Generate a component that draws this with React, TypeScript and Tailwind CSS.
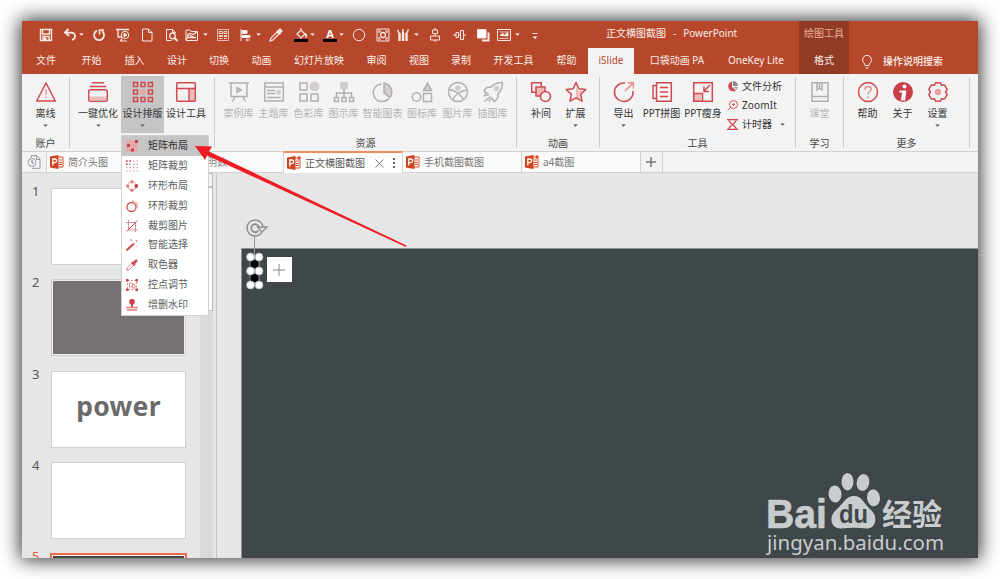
import React from 'react';

type IconName =
  | 'save' | 'undo' | 'redo' | 'present' | 'page' | 'preview' | 'folder' | 'grid' | 'align' | 'dropper'
  | 'fill' | 'fontColor' | 'circle' | 'frame' | 'pens' | 'center' | 'distribute' | 'layers' | 'picture' | 'more';

interface RibbonItem {
  label: string;
  icon: React.ReactNode;
  width: string;
  caret?: boolean;
  active?: boolean;
  disabled?: boolean;
}

// --- QUICK ACCESS ICONS (14x14 box) ---

const quickIcons: Record<IconName, React.ReactNode> = {
  save: <><path d="M1.5 1.5h11v11h-11z M3.5 1.5v4.5h7v-4.5" strokeWidth="1.4" /><path d="M4 12.5v-4h6v4" strokeWidth="1.4" /><path d="M5 10h2v2.5h-2z" fill="#fff" /></>,
  undo: <><path d="M5.5 1L2 4.500l4 3.500M2.300 4.600h5.700c5 0 5.500 5.700 1 7.400" strokeWidth="1.8" /></>,
  redo: <><path d="M5 2.600a5 5 0 1 0 5 .5" strokeWidth="1.8" /><path d="M7.500 6.500V2h4.500" strokeWidth="1.6" /></>,
  present: <><path d="M0 1.500h13M2 2v7h4M4 13l2-2" strokeWidth="1.300" /><circle cx="9" cy="7" r="3.700" /><path d="M8 5.200v3.600l3-1.800z" fill="#fff" /><path d="M5 13h6" /></>,
  page: <path d="M2.500 1h6l3.500 3.500v8.500h-9.500z M8.500 1v3.500h3.500" />,
  preview: <><path d="M10.500 4.500L7.500 1.500h-6v11h5" /><path d="M7.500 1.500v3h3" /><circle cx="7.500" cy="8" r="2.800" strokeWidth="1.300" /><path d="M9.500 10l3 3" strokeWidth="1.800" /></>,
  folder: <><path d="M1 12V2h4l1 1.500h6.500v9H1z" /><path d="M2 7l3-1.500 3 1L12 4M3 9.500h8M5 7.500l6 2.500M1 12l2.500-5" strokeWidth="1.300" /></>,
  grid: <><path d="M1.500 1.500h11v11h-11z" opacity=".7" /><path d="M3 3.500h3.500v2H3zM8 3.500h3v2H8zM3 7.500h3.500v1H3zM8 7.500h3v1H8zM3 10.500h3.500M8 10.500h3" opacity=".85" /></>,
  align: <><path d="M2 1v12" /><path d="M3 2.500h5v3h-5z" fill="#fff" /><path d="M3 7.500h8v2h-8z" fill="#fff" /><path d="M7 12h4M7 12l1.500-1.200M7 12l1.500 1.200" /></>,
  dropper: <><path d="M1 13l1-3 6-6 2 2-6 6z" strokeWidth="1.200" /><path d="M8 2.500l3.500 3.500M9 4l2-2.500 1.500 1.500-2 2z" strokeWidth="2" /></>,
  fill: <><path d="M3 6l4-4 4 4-4 4z M7 2V0" strokeWidth="1.200" /><path d="M11.500 5.500c1.500 1.500 1.500 3 .5 4z" fill="#fff" /><path d="M0 12.500h14" stroke="#000" strokeWidth="3" /></>,
  fontColor: <><text x="7" y="9.500" textAnchor="middle" fontSize="11" fontWeight="700" fill="#fff" stroke="none">A</text><path d="M0 12.500h14" stroke="#000" strokeWidth="3" /></>,
  circle: <circle cx="7" cy="7" r="5.700" />,
  frame: <><path d="M1 1h12v12h-12z" /><circle cx="7" cy="7" r="2.500" strokeWidth="1.300" /><path d="M3 5v-2h2M9 3h2v2M11 9v2h-2M5 11h-2v-2" strokeWidth="1.200" /></>,
  pens: <><path d="M3.500 5v8M7 4v9M10.500 5v8" strokeWidth="2.400" /><path d="M1.500 2l2 4M7 1v3M12.500 1.500l-2 4" strokeWidth="1.500" /></>,
  center: <path d="M4.500 2h5v3.500h-5z M2.500 8h9v4h-9z M7 0v2M7 5.500v2.500M7 12v2" />,
  distribute: <path d="M4 4.500h2.500v5h-2.500z M8.500 2.500h3v9h-3z M1 7h3M6.500 7h2M11.500 7h2.500" />,
  layers: <><path d="M6 12.500h6.500v-8" strokeWidth="2" /><path d="M1.500 1.500h8.500v8.500h-8.500z" fill="#fff" /></>,
  picture: <><path d="M.5 1.500h13v11H.5z" /><path d="M3 7.500l2.500-2 2 1.500 3.500-2.500v3.500z" fill="#fff" /><path d="M2.500 4h9M2.500 10.500h9" opacity=".8" /></>,
  more: <><path d="M4.500 5.500h5" /><path d="M4.700 8.500h4.600l-2.300 2.500z" fill="#fff" stroke="none" /></>,
};

const QuickIcon: React.FC<{ name: IconName; gap: string }> = ({ name, gap }) => (
  <svg viewBox="0 0 14 14" className={`h-[14px] w-[14px] shrink-0 overflow-visible ${gap}`} fill="none" stroke="#f8e9e4" strokeWidth="1">
    {quickIcons[name]}
  </svg>
);

const Caret: React.FC<{ className?: string; fill?: string }> = ({ className = '', fill = '#555' }) => (
  <svg viewBox="0 0 6 4" className={`h-[3px] w-[5px] shrink-0 ${className}`} fill={fill}>
    <path d="M0 .5h6l-3 3z" />
  </svg>
);

// --- RIBBON ICONS (22x22 box) ---

const Big: React.FC<{ children: React.ReactNode; gray?: boolean }> = ({ children, gray }) => (
  <svg viewBox="0 0 22 22" className="h-[22px] w-[22px] shrink-0" fill="none" stroke={gray ? '#b1afb0' : '#cf4a50'} strokeWidth="1.500">
    {children}
  </svg>
);

const P = '#f0b9ba';
const G = '#d3cdd0';

const offlineIcon = <Big><path d="M11 2L20.300 20H1.700z" strokeLinejoin="round" /><path d="M11 8v6M11 15.500v1.500" stroke="#e59a9c" /></Big>;
const optimizeIcon = <Big><path d="M5 1.800h12M2.800 5.500h16.400" /><rect x="1.700" y="8.800" width="18.600" height="11.500" rx="2" /><path d="M3 15.500h16v4h-16z" fill={P} stroke="none" /></Big>;
const layoutIcon = (
  <Big>
    {[1.5, 9, 16.5].map(x => [1.5, 9, 16.5].map(y => (
      x === 9 && y === 9
        ? <rect key={`${x}-${y}`} x="8.500" y="8.500" width="5" height="5" fill="#eba0a1" stroke="none" />
        : <rect key={`${x}-${y}`} x={x} y={y} width="4" height="4" />
    )))}
  </Big>
);
const toolsIcon = <Big><path d="M14.500 8h5v12h-5z" fill={P} stroke="none" /><rect x="1.700" y="1.700" width="18.600" height="18.600" rx="1" /><path d="M2 7.500h18M14 7.500V20" /></Big>;
const caseIcon = <Big gray><path d="M1 2h20M3 2v13.500h16V2M7 16l-2.500 4.500M15 16l2.500 4.500" /><path d="M9 6.500l4 2.500-4 2.500z" fill={G} /></Big>;
const themeIcon = <Big gray><path d="M1.700 2h18.600v18H1.700z M2 6h18M4 9.500h8M4 12.500h8M4 16.500h14" /><circle cx="15.500" cy="11.500" r="2.500" fill={G} stroke="none" /></Big>;
const colorIcon = <Big gray><path d="M2 2h7v7H2zM2 13h7v7H2zM13 13h7v7h-7z" /><circle cx="16.500" cy="5.500" r="4.300" fill={G} stroke={G} /></Big>;
const diagramIcon = <Big gray><path d="M8 1.500h6v6H8z" fill={G} stroke={G} /><path d="M11 8v8M3.500 16v-4h15v4M1.500 16.500h4v4h-4zM9 16.500h4v4H9zM16.500 16.500h4v4h-4z" /></Big>;
const chartIcon = <Big gray><path d="M12 2v10l6 4.500A9.200 9.200 0 0 0 12 2z" fill={G} /><path d="M9.500 3a8.800 8.800 0 1 0 7.500 14.300" /></Big>;
const symbolIcon = <Big gray><path d="M12.500 9.500L16.500 2l4 7.500z" fill={G} /><circle cx="5.500" cy="16" r="4.300" /><path d="M12.500 12.500h8v8h-8z" /></Big>;
const photoIcon = <Big gray><circle cx="11" cy="11" r="9.500" /><circle cx="11" cy="7" r="2" fill={G} stroke={G} /><path d="M2 8.500c5 0 11 4 14.500 10M6 19c1.500-5 7-9 14-10" /></Big>;
const rocketIcon = <Big gray><path d="M5.500 12.500L2 10c2-4 4-4.500 7-3.700C12 2.500 15.500 1.500 20.500 1.500c0 5-1 8.500-4.700 11.500.8 3-.3 5.500-3.800 7.500l-2.500-4" strokeLinejoin="round" /><path d="M7 13.500l-5.500 1.500M8.500 15.500l-6 5M5 12l-3 .5M10 17l-3.500 3.500" /><circle cx="14.500" cy="7.500" r="2" fill={G} stroke={G} /></Big>;
const tweenIcon = <Big><path d="M1.700 1.700h9.600v9.600H1.700z" /><path d="M6 6h9v9H6z" fill={P} /><circle cx="15.500" cy="15.500" r="5" fill="#f3f3f3" /></Big>;
const starIcon = <Big><path d="M11 5l2 4.500 5 .5-3.700 3.300L15 18l-4-2z" fill={P} stroke="none" /><path d="M11 1.500l2.900 6.300 6.800.8-5 4.700 1.300 6.900-6-3.400-6 3.400 1.300-6.900-5-4.700 6.800-.8z" strokeLinejoin="round" /></Big>;
const exportIcon = <Big><path d="M12 2A9.300 9.300 0 1 0 20 10" /><path d="M12 10l8-8M14.500 1.700h5.800v5.800" stroke="#e58f91" /></Big>;
const puzzleIcon = <Big><path d="M5.500 1.700h14.800v18.600H5.500zM5.500 4.500H2v13h3.500" /><path d="M9 6.500h8M9 11h8M9 15.500h8" /></Big>;
const slimIcon = <Big><path d="M2 13h7v7H2z" fill={P} stroke="none" /><path d="M1.700 1.700h18.600v18.600H1.700zM10.500 20v-8M1.700 12.500h9M18 4l-6 6M12 5.500v5h5" /></Big>;
const courseIcon = <Big gray><path d="M3 1.700h16v18.600H3zM3 15.500h16" /><path d="M8 2v7l2.500-2 2.500 2V2M10.500 3v4" /></Big>;
const helpIcon = <Big><circle cx="11" cy="11" r="9.500" /><path d="M8 8.500c0-4 6.500-4 6.200-.2-.2 2.200-3.200 2.400-3.200 5.200M11 15.500v1.700" stroke="#e58f91" /></Big>;
const aboutIcon = <Big><circle cx="11" cy="11" r="10" fill="#c9404a" stroke="none" /><circle cx="12.500" cy="5.500" r="2" fill="#fff" stroke="none" /><path d="M7.500 10.500h4c-.5 3-1.500 6-1.500 9M13.200 9.500c0 3.500-1 7-1 10" stroke="#fff" strokeWidth="2" /></Big>;
const settingsIcon = <Big><path d="M8.500 1.700h5l1 2.600 3-.4 2.700 4.400-1.700 2.700 1.700 2.700-2.700 4.400-3-.4-1 2.600h-5l-1-2.600-3 .4-2.700-4.400L3.500 11 1.800 8.300l2.700-4.400 3 .4z" strokeLinejoin="round" /><circle cx="11" cy="11" r="3.200" fill="#e8a0a2" stroke="none" /></Big>;

const layoutItems: RibbonItem[] = [
  { label: '一键优化', icon: optimizeIcon, width: 'w-[46px]', caret: true },
  { label: '设计排版', icon: layoutIcon, width: 'w-[43px]', caret: true, active: true },
  { label: '设计工具', icon: toolsIcon, width: 'w-[44px]' },
];

const resourceItems: RibbonItem[] = [
  { label: '案例库', icon: caseIcon, width: 'w-[35px]', disabled: true },
  { label: '主题库', icon: themeIcon, width: 'w-[35px]', disabled: true },
  { label: '色彩库', icon: colorIcon, width: 'w-[35px]', disabled: true },
  { label: '图示库', icon: diagramIcon, width: 'w-[35px]', disabled: true },
  { label: '智能图表', icon: chartIcon, width: 'w-[43px]', disabled: true },
  { label: '图标库', icon: symbolIcon, width: 'w-[36px]', disabled: true },
  { label: '图片库', icon: photoIcon, width: 'w-[35px]', disabled: true },
  { label: '插图库', icon: rocketIcon, width: 'w-[35px]', disabled: true },
];

const RibbonButton: React.FC<{ item: RibbonItem }> = ({ item }) => (
  <div className={`flex h-[57px] shrink-0 flex-col items-center pt-[5px] ${item.width} ${item.active ? 'bg-[#c5c5c5]' : ''}`}>
    {item.icon}
    <span className={`mt-[3px] text-[10px] leading-[15px] whitespace-nowrap ${item.disabled ? 'text-[#b4b4b4]' : 'text-[#333]'}`}>{item.label}</span>
    {item.caret && <Caret className="mt-[3px]" />}
  </div>
);

const RibbonGroup: React.FC<{ width: string; label?: string; pad?: string; children: React.ReactNode }> = ({ width, label, pad = '', children }) => (
  <div className={`mt-[3px] flex h-[71px] shrink-0 flex-col border-r border-[#cbcbcb] ${width}`}>
    <div className={`-mt-px flex h-[59px] shrink-0 ${pad}`}>{children}</div>
    <div className="text-center text-[10px] leading-[17px] text-[#444]">{label}</div>
  </div>
);

// --- DROPDOWN ---

const menuItems: { label: string; icon: React.ReactNode }[] = [
  { label: '矩阵布局', icon: <><path d="M0 0h12v12H0z" fill="#e3a9ab" stroke="none" /><path d="M9 0h3v3H9zM1 4h3v3H1zM5 8.500h3v3H5z" fill="#c9404a" stroke="none" /></> },
  { label: '矩阵裁剪', icon: <><path d="M0 1h12M0 4.300h12M0 7.700h12M0 11h12" strokeDasharray="1.500 2" stroke="#dc9092" /><path d="M0 1h6M0 4.300h4" strokeDasharray="1.500 2" stroke="#c9404a" strokeWidth="1.500" /></> },
  { label: '环形布局', icon: <><circle cx="6" cy="6" r="4.200" strokeDasharray="3.600 3" strokeDashoffset="-1.500" stroke="#dc9092" /><circle cx="6" cy="1.700" r="1.700" fill="#dc8082" stroke="none" /><circle cx="6" cy="10.300" r="1.700" fill="#dc8082" stroke="none" /><circle cx="1.700" cy="6" r="1.700" fill="#dc8082" stroke="none" /><circle cx="10.300" cy="6" r="1.900" fill="#c9404a" stroke="none" /></> },
  { label: '环形裁剪', icon: <><circle cx="5.500" cy="7" r="4.500" strokeWidth="1.300" /><path d="M6 1c4 0 6 3 5 7" stroke="#dc9092" /></> },
  { label: '裁剪图片', icon: <><path d="M2.500 0v10H12M0 2.500h9.500V12" stroke="#dc9092" /><path d="M.5 11.500l11-11" /></> },
  { label: '智能选择', icon: <><path d="M.5 11.500L8 4.500" strokeWidth="2" /><path d="M5 0v2M4 1h2M10.500 1v2M9.500 2h2M11 7v1" stroke="#dc9092" /></> },
  { label: '取色器', icon: <><path d="M.7 11.300l.8-2.500 5-5 1.800 1.800-5 5z" stroke="#d77" /><path d="M6 3l3 3M7.500 4.500L11 1" strokeWidth="2.500" /></> },
  { label: '控点调节', icon: <><path d="M1.500 1.500h9v9h-9z" strokeDasharray="2 1.500" stroke="#dc9092" /><path d="M3.500 4h3v4h-3zM6 5.500h3V9H6" stroke="#dc9092" /><path d="M0 0h2.500v2.500H0zM9.500 0H12v2.500H9.500zM0 9.500h2.500V12H0zM9.500 9.500H12V12H9.500z" fill="#c9404a" stroke="none" /></> },
  { label: '增删水印', icon: <><circle cx="6" cy="2.800" r="2.800" fill="#c9404a" stroke="none" /><path d="M6 5v3" strokeWidth="2" /><path d="M0 8.500h12M1 11h10" stroke="#dc7e80" strokeWidth="1.500" /></> },
];

const LayoutMenu: React.FC = () => (
  <div className="absolute top-[114px] left-[99px] z-20 w-[88px] border border-[#d0d0d0] bg-white">
    {menuItems.map((item, i) => (
      <div key={item.label} className={`flex h-[19.900px] items-center pl-[4px] ${i === 0 ? 'bg-[#c5c5c5]' : ''}`}>
        <svg viewBox="0 0 12 12" className="h-3 w-3" fill="none" stroke="#cf4a50" strokeWidth="1">{item.icon}</svg>
        <span className={`-mt-px ml-[10px] text-[10px] ${i === 0 ? 'text-[#333]' : 'text-[#5c5c5c]'}`}>{item.label}</span>
      </div>
    ))}
  </div>
);

// --- DOCUMENT TABS ---

const PptIcon: React.FC<{ modified?: boolean }> = ({ modified }) => (
  <svg viewBox="0 0 14 14" className="h-[14px] w-[14px] shrink-0">
    <path d="M7 2h6v10H7z" fill="#fff" stroke="#d5512f" />
    <path d="M9 5h3M9 7.500h3M9 9.500h3" stroke="#d5512f" />
    <path d="M0 1.500L8.500 0v14L0 12.500z" fill="#cf4420" />
    <path d="M2.800 10.500V4h2c2.500 0 2.500 3.600 0 3.600h-2" fill="none" stroke="#fff" strokeWidth="1.300" />
    {modified && <circle cx="12" cy="2" r="2" fill="#f0401c" stroke="#fff" strokeWidth=".5" />}
  </svg>
);

const DocTab: React.FC<{ title: string; modified?: boolean }> = ({ title, modified }) => (
  <div className="flex w-[119px] shrink-0 items-center border-r border-[#d2d2d2] bg-[#fafafa] pl-[3px]">
    <PptIcon modified={modified} />
    <span className="ml-[4px] text-[10px] text-[#777]">{title}</span>
  </div>
);

const DocTabs: React.FC = () => (
  <div className="flex h-[22px] border-y border-[#d2d2d2] bg-[#f3f3f3]">
    <div className="flex w-[25px] items-center justify-center border-r border-[#d2d2d2]">
      <svg viewBox="0 0 14 14" className="h-[14px] w-[14px]" fill="none" stroke="#999">
        <path d="M4 3V.7h6L13 4v9.300H5" />
        <path d="M9.500 1v3.500H13" />
        <circle cx="5" cy="7.500" r="4" />
        <path d="M5 5v3h2" stroke="#6a78a5" />
      </svg>
    </div>
    <DocTab title="简介头图" />
    <div className="flex w-[117px] shrink-0 items-center bg-[#fafafa] pl-[41px]">
      <span className="text-[10px] text-[#888]">明数</span>
    </div>
    <div className="-my-px flex w-[120px] shrink-0 items-center border-x border-t-2 border-x-[#d2d2d2] border-t-[#ee8c5e] bg-white pl-[3px]">
      <PptIcon modified />
      <span className="ml-[4px] text-[10px] text-[#555]">正文横图截图</span>
      <svg viewBox="0 0 9 9" className="ml-[10px] h-[9px] w-[9px]" stroke="#777"><path d="M.5.5l8 8M8.500.5l-8 8" /></svg>
      <svg viewBox="0 0 2 10" className="ml-[9px] h-[10px] w-[2px]" fill="#666"><path d="M0 0h2v2H0zM0 4h2v2H0zM0 8h2v2H0z" /></svg>
    </div>
    <DocTab title="手机截图截图" />
    <DocTab title="a4截图" modified />
    <div className="flex w-[22px] items-center justify-center border-r border-[#d2d2d2] pr-[2px]">
      <svg viewBox="0 0 10 10" className="h-[10px] w-[10px]" stroke="#777" strokeWidth="1.500"><path d="M5 0v10M0 5h10" /></svg>
    </div>
  </div>
);

// --- HEADER ---

const menuTabs: { label: string; width: string; selected?: boolean }[] = [
  { label: '文件', width: 'w-[48px]' },
  { label: '开始', width: 'w-[43px]' },
  { label: '插入', width: 'w-[43px]' },
  { label: '设计', width: 'w-[42px]' },
  { label: '切换', width: 'w-[42px]' },
  { label: '动画', width: 'w-[43px]' },
  { label: '幻灯片放映', width: 'w-[72px]' },
  { label: '审阅', width: 'w-[43px]' },
  { label: '视图', width: 'w-[42px]' },
  { label: '录制', width: 'w-[42px]' },
  { label: '开发工具', width: 'w-[63px]' },
  { label: '帮助', width: 'w-[43px]' },
  { label: 'iSlide', width: 'w-[46px]', selected: true },
  { label: '口袋动画 PA', width: 'w-[86px]' },
  { label: 'OneKey Lite', width: 'w-[72px]' },
];

const Header: React.FC = () => (
  <div className="flex h-[53px] bg-[#b7472a] text-[10px] text-[#fbeee9]">
    <div className="w-[777px]">
      <div className="flex h-[27px] items-center">
        <QuickIcon name="save" gap="ml-[17px]" />
        <QuickIcon name="undo" gap="ml-[10px]" />
        <Caret className="ml-[2px]" fill="#fff" />
        <QuickIcon name="redo" gap="ml-[8px]" />
        <QuickIcon name="present" gap="ml-[10px]" />
        <QuickIcon name="page" gap="ml-[10px]" />
        <QuickIcon name="preview" gap="ml-[11px]" />
        <QuickIcon name="folder" gap="ml-[6px]" />
        <Caret className="ml-[4px]" fill="#fff" />
        <QuickIcon name="grid" gap="ml-[8px]" />
        <QuickIcon name="align" gap="ml-[9px]" />
        <Caret className="ml-[3px]" fill="#fff" />
        <QuickIcon name="dropper" gap="ml-[8px]" />
        <QuickIcon name="fill" gap="ml-[11px]" />
        <Caret className="ml-[2px]" fill="#fff" />
        <QuickIcon name="fontColor" gap="ml-[8px]" />
        <Caret className="ml-[2px]" fill="#fff" />
        <QuickIcon name="circle" gap="ml-[8px]" />
        <QuickIcon name="frame" gap="ml-[10px]" />
        <QuickIcon name="pens" gap="ml-[6px]" />
        <Caret className="ml-[4px]" fill="#fff" />
        <QuickIcon name="center" gap="ml-[9px]" />
        <QuickIcon name="distribute" gap="ml-[10px]" />
        <QuickIcon name="layers" gap="ml-[10px]" />
        <QuickIcon name="picture" gap="ml-[7px]" />
        <Caret className="ml-[4px]" fill="#fff" />
        <QuickIcon name="more" gap="ml-[8px]" />
        <span className="-mt-[3px] ml-[64px] whitespace-pre [word-spacing:0.9px]">正文横图截图  -  PowerPoint</span>
      </div>
      <div className="flex h-[26px]">
        {menuTabs.map(tab => (
          <div key={tab.label} className={`flex shrink-0 items-center justify-center pb-px whitespace-nowrap ${tab.width} ${tab.selected ? 'bg-[#f3f3f3] text-[#b7472a]' : ''}`}>
            {tab.label}
          </div>
        ))}
      </div>
    </div>
    <div className="w-[50px] bg-[#913a24] text-center">
      <div className="pt-[4px] leading-[17px] text-[#eeb09d]">绘图工具</div>
      <div className="mt-[10px] leading-[17px]">格式</div>
    </div>
    <div className="mt-[27px] flex h-[26px] items-center pl-[13px]">
      <svg viewBox="0 0 10 14" className="mt-px h-[14px] w-[10px]" fill="none" stroke="#fbeee9"><path d="M3 10.500C3 8 .6 7.500.6 4.800a4.400 4.400 0 0 1 8.800 0C9.400 7.500 7 8 7 10.500zM3.500 13h3" /></svg>
      <span className="ml-[11px] font-medium">操作说明搜索</span>
    </div>
  </div>
);

const Ribbon: React.FC = () => (
  <div className="flex h-[77px] bg-[#f3f3f3]">
    <RibbonGroup width="w-[48px]" label="账户" pad="pl-[5px]">
      <RibbonButton item={{ label: '离线', icon: offlineIcon, width: 'w-[37px]', caret: true }} />
    </RibbonGroup>
    <RibbonGroup width="w-[145px]" pad="pl-[5px]">
      {layoutItems.map(item => <RibbonButton key={item.label} item={item} />)}
    </RibbonGroup>
    <RibbonGroup width="w-[302px]" label="资源" pad="pl-[6px]">
      {resourceItems.map(item => <RibbonButton key={item.label} item={item} />)}
    </RibbonGroup>
    <RibbonGroup width="w-[83px]" label="动画" pad="pl-[7px]">
      <RibbonButton item={{ label: '补间', icon: tweenIcon, width: 'w-[34px]' }} />
      <RibbonButton item={{ label: '扩展', icon: starIcon, width: 'w-[35px]', caret: true }} />
    </RibbonGroup>
    <RibbonGroup width="w-[196px]" label="工具" pad="pl-[6px]">
      <RibbonButton item={{ label: '导出', icon: exportIcon, width: 'w-[35px]', caret: true }} />
      <RibbonButton item={{ label: 'PPT拼图', icon: puzzleIcon, width: 'w-[41px]' }} />
      <RibbonButton item={{ label: 'PPT瘦身', icon: slimIcon, width: 'w-[42px]' }} />
      <div className="ml-[3px] flex flex-col pt-px text-[10px] text-[#333]">
        <div className="flex h-[19px] items-center">
          <svg viewBox="0 0 11 11" className="h-[11px] w-[11px]"><path d="M5 .5v5.500l4 3.500A5 5 0 1 1 5 .5z" fill="#cf4a50" /><path d="M6 0a5 5 0 0 1 5 5H6z" fill="#888" /><path d="M6.500 6H11l-1.500 3z" fill="#aaa" /></svg>
          <span className="ml-[4px]">文件分析</span>
        </div>
        <div className="flex h-[19px] items-center">
          <svg viewBox="0 0 11 11" className="h-[11px] w-[11px]" fill="none" stroke="#d4595d"><circle cx="6.500" cy="4.500" r="4" /><path d="M3.500 7.500L.5 10.500M5 4.500h3M6.500 3v3" /></svg>
          <span className="ml-[4px] tracking-[0.150px]">ZoomIt</span>
        </div>
        <div className="flex h-[19px] items-center">
          <svg viewBox="0 0 11 11" className="h-[11px] w-[11px]" fill="none" stroke="#cf4a50" strokeWidth="1.200"><path d="M0 .6h11M0 10.400h11M1.800 1c0 3 7.400 6 7.400 9M9.200 1c0 3-7.400 6-7.400 9" /></svg>
          <span className="ml-[4px]">计时器</span>
          <Caret className="ml-[8px]" />
        </div>
      </div>
    </RibbonGroup>
    <RibbonGroup width="w-[48px]" label="学习" pad="pl-[6px]">
      <RibbonButton item={{ label: '课堂', icon: courseIcon, width: 'w-[35px]', disabled: true }} />
    </RibbonGroup>
    <RibbonGroup width="w-[126px]" label="更多" pad="pl-[6px]">
      <RibbonButton item={{ label: '帮助', icon: helpIcon, width: 'w-[35px]' }} />
      <RibbonButton item={{ label: '关于', icon: aboutIcon, width: 'w-[35px]' }} />
      <RibbonButton item={{ label: '设置', icon: settingsIcon, width: 'w-[35px]', caret: true }} />
    </RibbonGroup>
  </div>
);

// --- SLIDE PANEL ---

const Thumbnail: React.FC<{ index: number; children: React.ReactNode }> = ({ index, children }) => (
  <div className="flex h-[91.300px] shrink-0">
    <span className={`-mt-[3px] h-[13px] w-[29px] pl-[10px] text-[13px] leading-[13px] ${index === 5 ? 'text-[#e8603c]' : 'text-[#555]'}`}>{index}</span>
    {children}
  </div>
);

const SlidePanel: React.FC = () => (
  <div className="flex w-[195px] overflow-hidden border-r border-[#c6c6c6]">
    <div className="flex w-[178px] flex-col pt-[15px]">
      <Thumbnail index={1}><div className="h-[77px] w-[135px] border border-[#d0d0d0] bg-white" /></Thumbnail>
      <Thumbnail index={2}>
        <div className="h-[77px] w-[135px] border border-[#d0d0d0] bg-[#eee] p-px">
          <div className="h-full w-full bg-[#767171]" />
        </div>
      </Thumbnail>
      <Thumbnail index={3}>
        <div className="flex h-[77px] w-[135px] items-center justify-center border border-[#d0d0d0] bg-white">
          <span className="-mt-[4px] text-[26.500px] font-bold tracking-[0.300px] text-[#6b6b6b]">power</span>
        </div>
      </Thumbnail>
      <Thumbnail index={4}><div className="h-[77px] w-[135px] border border-[#d0d0d0] bg-white" /></Thumbnail>
      <Thumbnail index={5}>
        <div className="-ml-px h-[80px] w-[137px] border-2 border-[#ee6a48] bg-[#f3ece9] p-px">
          <div className="h-full w-full bg-[#40474a]" />
        </div>
      </Thumbnail>
    </div>
    <div className="h-full w-[13px] bg-[#dadada]">
      <div className="h-[14px] w-[13px] border border-[#bbb] bg-[#f5f5f5]" />
      <div className="h-[124px] w-[13px] border border-[#bbb] bg-white" />
    </div>
  </div>
);

const Watermark: React.FC = () => (
  <svg viewBox="0 0 190 100" className="absolute right-[22px] bottom-0 h-[100px] w-[190px]" fill="#c8cccc">
    <text x="0" y="69.500" fontSize="41" fontWeight="700" fontFamily="Liberation Sans, sans-serif" textLength="61" lengthAdjust="spacingAndGlyphs" stroke="#c8cccc" strokeWidth=".6">Bai</text>
    <ellipse cx="69" cy="36" rx="6.500" ry="8.500" transform="rotate(-6 69 36)" />
    <ellipse cx="81.500" cy="23.700" rx="6" ry="8.700" />
    <ellipse cx="97" cy="24.500" rx="6.300" ry="8.500" transform="rotate(10 97 24.500)" />
    <ellipse cx="107.500" cy="39.800" rx="6.500" ry="8.500" transform="rotate(-8 107.500 39.800)" />
    <path d="M88 38c8 0 10 8 17 14 8 7 4 19-4 18.500-9-1-17-1-26 0-10 .5-13-11.500-5-18.500 7-6 10-14 18-14z" />
    <text x="73" y="65" fontSize="25" fontWeight="700" fill="#40474a" fontFamily="Liberation Sans, sans-serif" textLength="29" lengthAdjust="spacingAndGlyphs">du</text>
    <text x="116" y="67" fontSize="30" fontWeight="700" fontFamily="Noto Sans CJK SC, sans-serif">经验</text>
    <text x="1" y="92" fontSize="20" textLength="177" lengthAdjust="spacingAndGlyphs">jingyan.baidu.com</text>
  </svg>
);

const Workspace: React.FC = () => (
  <div className="relative flex-1 pt-[75px] pl-[24px]">
    <div className="relative h-full border-t border-l border-[#8d9294] bg-[#40474a]">
      <Watermark />
    </div>
    {/* selection handles, rotate grip and quick add button */}
    <svg viewBox="0 0 60 80" className="absolute top-[41px] left-[23px] h-[80px] w-[60px]" fill="none" stroke="#999">
      <circle cx="15" cy="14" r="8" strokeWidth="1.500" stroke="#8f8f8f" />
      <path d="M18.500 16.500a4 4 0 1 1 .5-3.500" strokeWidth="1.800" stroke="#8f8f8f" />
      <path d="M17.500 13h9.500l-5 5z" strokeWidth="1.300" fill="#e6e6e6" stroke="#8f8f8f" />
      <path d="M14.500 22v49M10 43v28M19 43v28" />
      <circle cx="14.500" cy="50" r="4" fill="#000" stroke="none" />
      <circle cx="14.500" cy="64" r="4" fill="#000" stroke="none" />
      {[43, 57, 71].map(y => [10.5, 19].map(x => (
        <circle key={`${x}-${y}`} cx={x} cy={y} r="4" fill="#fff" stroke="#aaa" strokeWidth=".8" />
      )))}
    </svg>
    <div className="absolute top-[84px] left-[50px] flex h-[25px] w-[25px] items-center justify-center bg-white pr-px">
      <svg viewBox="0 0 12 12" className="h-3 w-3" stroke="#8a8a8a"><path d="M6 0v12M0 6h12" /></svg>
    </div>
  </div>
);

const App: React.FC = () => {
  return (
    <div className="h-[579px] w-[1000px] overflow-hidden bg-white pt-[21px] pl-[22px] font-['Noto_Sans','Noto_Sans_CJK_SC',sans-serif]">
      <div className="relative flex h-[537px] w-[956px] flex-col shadow-[0_0_18px_2px_rgba(0,0,0,0.8)]">
        <Header />
        <Ribbon />
        <DocTabs />
        <div className="flex min-h-0 flex-1 bg-[#e6e6e6]">
          <SlidePanel />
          <Workspace />
        </div>
        <LayoutMenu />
        <svg viewBox="0 0 215 105" className="absolute top-[123px] left-[172px] z-30 h-[105px] w-[215px]" fill="#ee1c25">
          <path d="M1 2L18 2.500 15 7.500 212.500 101.500 212 103 13 11.500 11 16z" />
        </svg>
      </div>
    </div>
  );
};

export default App;
